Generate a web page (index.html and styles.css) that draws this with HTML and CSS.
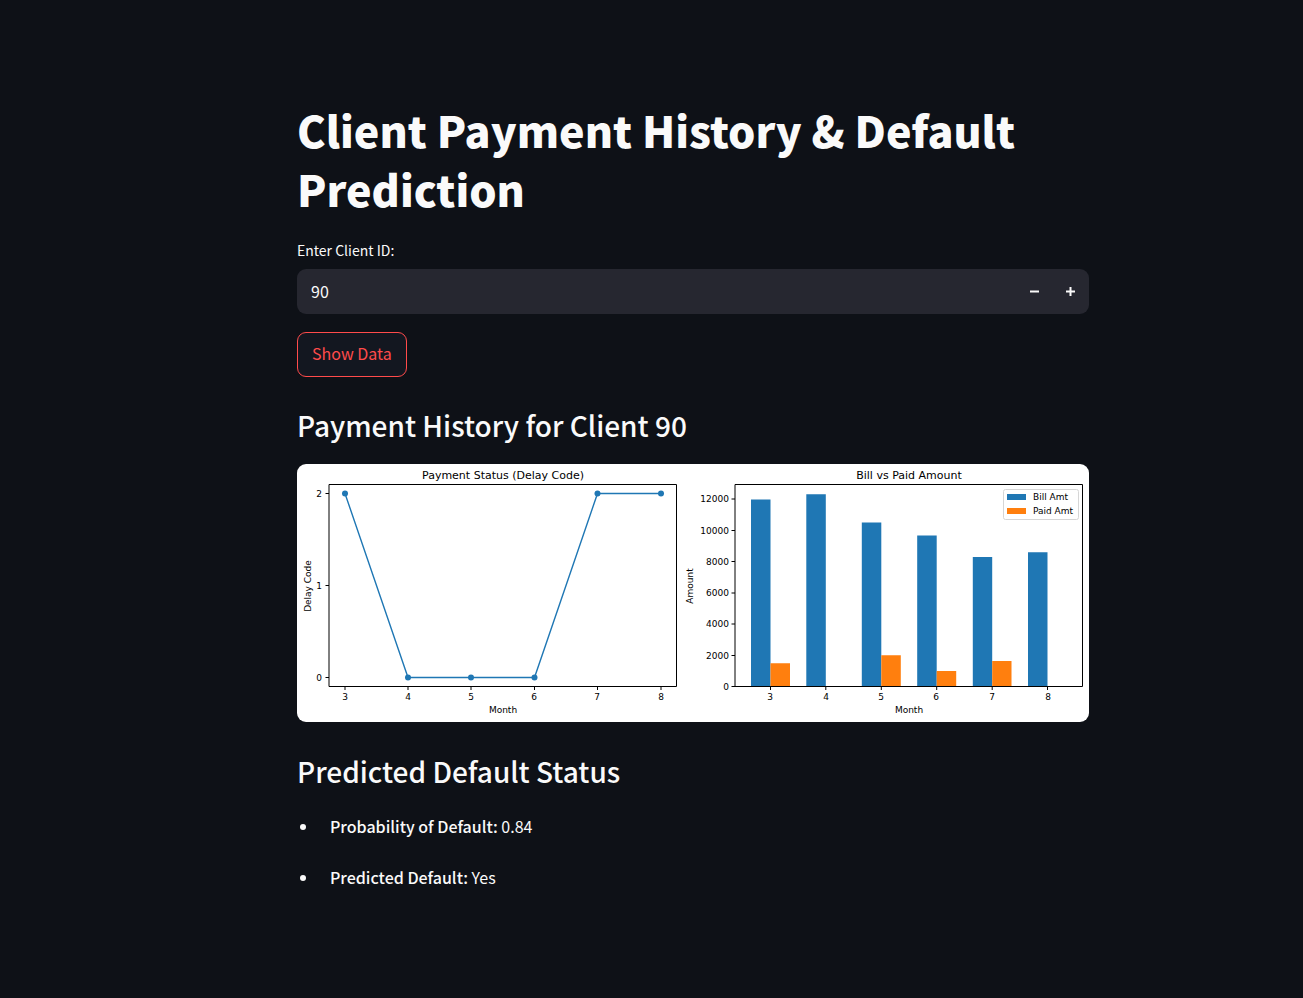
FILE: index.html
```html
<!DOCTYPE html>
<html lang="en">
<head>
<meta charset="utf-8">
<title>Client Payment History</title>
<link rel="stylesheet" href="styles.css">
</head>
<body>
<main class="page">
  <h1 class="title">Client Payment History &amp; Default Prediction</h1>
  <form class="form">
    <label class="label" for="client-id">Enter Client ID:</label>
    <div class="number">
      <input class="number-input" id="client-id" type="text" inputmode="numeric" value="90">
      <button class="step" type="button" aria-label="Decrease"><svg width="10" height="10" viewBox="0 0 10 10"><path d="M0 4.5H9"/></svg></button>
      <button class="step" type="button" aria-label="Increase"><svg width="10" height="10" viewBox="0 0 10 10"><path d="M0 4.5H9M4.5 0V9"/></svg></button>
    </div>
    <button class="show" type="button">Show Data</button>
  </form>
  <h3 class="subtitle">Payment History for Client 90</h3>
  <svg class="chart" viewBox="0 0 792 258" role="img" aria-label="Payment status and bill amounts by month">
    <text class="chart-title" x="206" y="15">Payment Status (Delay Code)</text>
    <path class="axis" d="M32 20.5H379.5V222.5H32ZM28.5 29.5H32M28.5 121.5H32M28.5 213.5H32M48 222.5V226M111 222.5V226M174 222.5V226M237.5 222.5V226M300.5 222.5V226M364 222.5V226"/>
    <g class="end"><text x="25" y="33">2</text><text x="25" y="125">1</text><text x="25" y="217">0</text></g>
    <g class="mid"><text x="48" y="236">3</text><text x="111" y="236">4</text><text x="174" y="236">5</text><text x="237" y="236">6</text><text x="300" y="236">7</text><text x="364" y="236">8</text><text x="206" y="249">Month</text><text transform="translate(14 122) rotate(-90)">Delay Code</text></g>
    <path class="line" d="M48 29.5L111 213.5H237.5L300.5 29.5H364"/>
    <g class="blue"><circle cx="48" cy="29.5" r="3"/><circle cx="111" cy="213.5" r="3"/><circle cx="174" cy="213.5" r="3"/><circle cx="237.5" cy="213.5" r="3"/><circle cx="300.5" cy="29.5" r="3"/><circle cx="364" cy="29.5" r="3"/></g>

    <text class="chart-title" x="612" y="15">Bill vs Paid Amount</text>
    <path class="blue" d="M454 222.5V35.5H473.5V222.5ZM509.3 222.5V30.3H528.8V222.5ZM564.8 222.5V58.6H584.3V222.5ZM620.2 222.5V71.6H639.7V222.5ZM675.8 222.5V93H695.2V222.5ZM731 222.5V88.3H750.5V222.5Z"/>
    <path class="orange" d="M473.5 222.5V199.3H493V222.5ZM584.3 222.5V191.3H603.8V222.5ZM639.7 222.5V207H659.2V222.5ZM695.2 222.5V197H714.5V222.5Z"/>
    <path class="axis" d="M438 20.5H785.5V222.5H438ZM434.5 35H438M434.5 66.5H438M434.5 97.5H438M434.5 129H438M434.5 160H438M434.5 191.5H438M434.5 222.5H438M473.5 222.5V226M528.8 222.5V226M584.3 222.5V226M639.7 222.5V226M695.2 222.5V226M750.5 222.5V226"/>
    <g class="end"><text x="432" y="38">12000</text><text x="432" y="70">10000</text><text x="432" y="101">8000</text><text x="432" y="132">6000</text><text x="432" y="163">4000</text><text x="432" y="195">2000</text><text x="432" y="226">0</text></g>
    <g class="mid"><text x="473" y="236">3</text><text x="529" y="236">4</text><text x="584" y="236">5</text><text x="639" y="236">6</text><text x="695" y="236">7</text><text x="751" y="236">8</text><text x="612" y="249">Month</text><text transform="translate(396 122) rotate(-90)">Amount</text></g>
    <rect class="legend" x="706.5" y="25.5" width="75" height="30" rx="2"/>
    <rect class="blue" x="710" y="30" width="19" height="6"/>
    <rect class="orange" x="710" y="44" width="19" height="6"/>
    <text x="736" y="36">Bill Amt</text><text x="736" y="50">Paid Amt</text>
  </svg>
  <h3 class="subtitle">Predicted Default Status</h3>
  <ul class="results">
    <li><strong>Probability of Default:</strong> 0.84</li>
    <li><strong>Predicted Default:</strong> Yes</li>
  </ul>
</main>
</body>
</html>
```
FILE: styles.css
```css
* { box-sizing: border-box; }
body {
  margin: 0;
  min-height: 100vh;
  background: #0e1117;
  color: #fafafa;
  font: 16px/28px "Noto Sans CJK SC", "Open Sans", sans-serif;
}
.page { padding: 100px 214px 80px 297px; }
.title { margin: 0; font-size: 43px; line-height: 59px; font-weight: 900; }
.form { display: flex; flex-direction: column; align-items: flex-start; margin-top: 20px; }
.label { font-size: 14px; line-height: 24px; margin-bottom: 7px; }
.number {
  display: flex;
  align-self: stretch;
  height: 45px;
  border-radius: 9px;
  background: #262730;
  overflow: hidden;
}
.number-input {
  flex: 1;
  min-width: 0;
  padding: 0 14px 2px;
  border: 0;
  outline: 0;
  background: transparent;
  color: inherit;
  font: inherit;
}
.step {
  display: grid;
  place-items: center;
  width: 36px;
  padding: 0;
  border: 0;
  background: transparent;
}
.step path { fill: none; stroke: #fafafa; stroke-width: 2; }
.show {
  margin-top: 18px;
  height: 45px;
  padding: 0 14px 3px;
  border: 1px solid #ff4b4b;
  border-radius: 9px;
  background: #131720;
  color: #ff4b4b;
  font: inherit;
}
.subtitle { margin: 28px 0 19px; font-size: 28px; line-height: 40px; font-weight: 500; }
.chart {
  display: block;
  width: 100%;
  margin-bottom: 29px;
  border-radius: 9px;
  background: #fff;
  font: 9px "DejaVu Sans", sans-serif;
}
.chart-title { font-size: 11px; text-anchor: middle; }
.mid { text-anchor: middle; }
.end { text-anchor: end; }
.axis { fill: none; stroke: #000; stroke-width: 1; }
.line { fill: none; stroke: #1f77b4; stroke-width: 1.4; }
.blue { fill: #1f77b4; }
.orange { fill: #ff7f0e; }
.legend { fill: #fff; stroke: #d6d6d6; }
.results {
  display: grid;
  gap: 23px;
  margin: 0;
  padding: 2px 0 0 33px;
  list-style: none;
}
.results strong { font-weight: 500; }
.results li { position: relative; }
.results li::before {
  content: "";
  position: absolute;
  left: -30px;
  top: 12px;
  width: 6px;
  height: 6px;
  border-radius: 50%;
  background: currentColor;
}
```
